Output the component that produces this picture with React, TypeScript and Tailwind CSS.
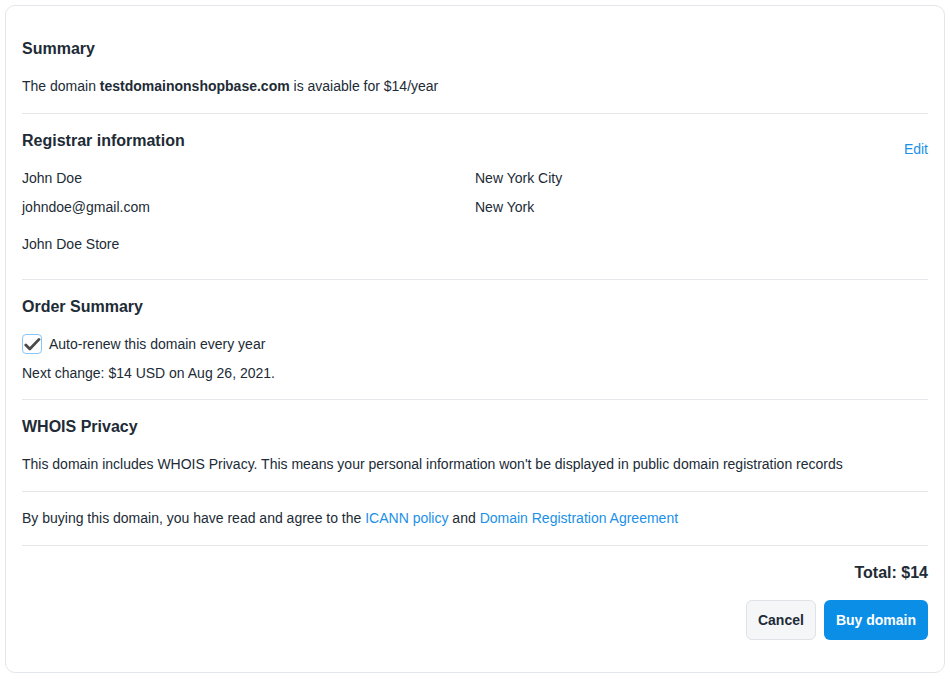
import type { FC } from 'react';

const Divider: FC = () => <div className="h-px bg-[#e5e7eb]" />;

const Heading: FC<{ children: React.ReactNode }> = ({ children }) => (
  <h2 className="text-[16px] leading-[24px] font-bold text-[#212b36]">{children}</h2>
);

export default function App() {
  return (
    <div
      className="w-[950px] h-[679px] bg-white pt-[5px] pl-[5px] text-[14px] leading-[20px] text-[#212b36]"
      style={{ fontFamily: '"Liberation Sans", Arial, sans-serif' }}
    >
      <div className="w-[940px] h-[668px] border border-[#e3e6ea] rounded-[10px] px-[16px]">
        {/* Summary */}
        <div className="pt-[31px] pb-[17px]">
          <Heading>Summary</Heading>
          <p className="mt-[15px]">
            The domain <span className="font-bold">testdomainonshopbase.com</span> is avaiable for $14/year
          </p>
        </div>
        <Divider />

        {/* Registrar */}
        <div className="pt-[15px] pb-[25px]">
          <div className="flex justify-between items-start h-[24px]">
            <Heading>Registrar information</Heading>
            <a className="text-[#1a90e8] mt-[10px] cursor-pointer">Edit</a>
          </div>
          <div className="grid grid-cols-2 mt-[15px] gap-y-[9px]">
            <span>John Doe</span>
            <span>New York City</span>
            <span>johndoe@gmail.com</span>
            <span>New York</span>
          </div>
          <p className="mt-[17px]">John Doe Store</p>
        </div>
        <Divider />

        {/* Order Summary */}
        <div className="pt-[15px] pb-[16px]">
          <Heading>Order Summary</Heading>
          <label className="flex items-center gap-[7px] mt-[15px]">
            <span className="w-[20px] h-[20px] rounded-[4px] border border-[#86c5f4] flex items-center justify-center bg-white">
              <svg width="17" height="15" viewBox="0 0 17 15" fill="none">
                <path d="M1.8 8 L5.8 12 L15 2.4" stroke="#4a4a4a" strokeWidth="2.8" strokeLinecap="round" strokeLinejoin="round" />
              </svg>
            </span>
            <span>Auto-renew this domain every year</span>
          </label>
          <p className="mt-[9px]">Next change: $14 USD on Aug 26, 2021.</p>
        </div>
        <Divider />

        {/* WHOIS */}
        <div className="pt-[15px] pb-[17px]">
          <Heading>WHOIS Privacy</Heading>
          <p className="mt-[15px]">
            This domain includes WHOIS Privacy. This means your personal information won't be displayed in public domain registration records
          </p>
        </div>
        <Divider />

        {/* Agreement */}
        <div className="pt-[16px] pb-[17px]">
          <p>
            By buying this domain, you have read and agree to the{' '}
            <a className="text-[#1a90e8] cursor-pointer">ICANN policy</a> and{' '}
            <a className="text-[#1a90e8] cursor-pointer">Domain Registration Agreement</a>
          </p>
        </div>
        <Divider />

        {/* Total */}
        <div className="pt-[15px] flex flex-col items-end">
          <p className="text-[16px] leading-[24px] font-bold">Total: $14</p>
          <div className="flex gap-[8px] mt-[15px]">
            <button className="h-[40px] px-[11px] rounded-[6px] border border-[#dfe3e8] bg-[#f4f6f8] font-bold text-[#212b36]">
              Cancel
            </button>
            <button className="h-[40px] px-[12px] rounded-[6px] bg-[#0b8ee6] font-bold text-white">
              Buy domain
            </button>
          </div>
        </div>
      </div>
    </div>
  );
}
